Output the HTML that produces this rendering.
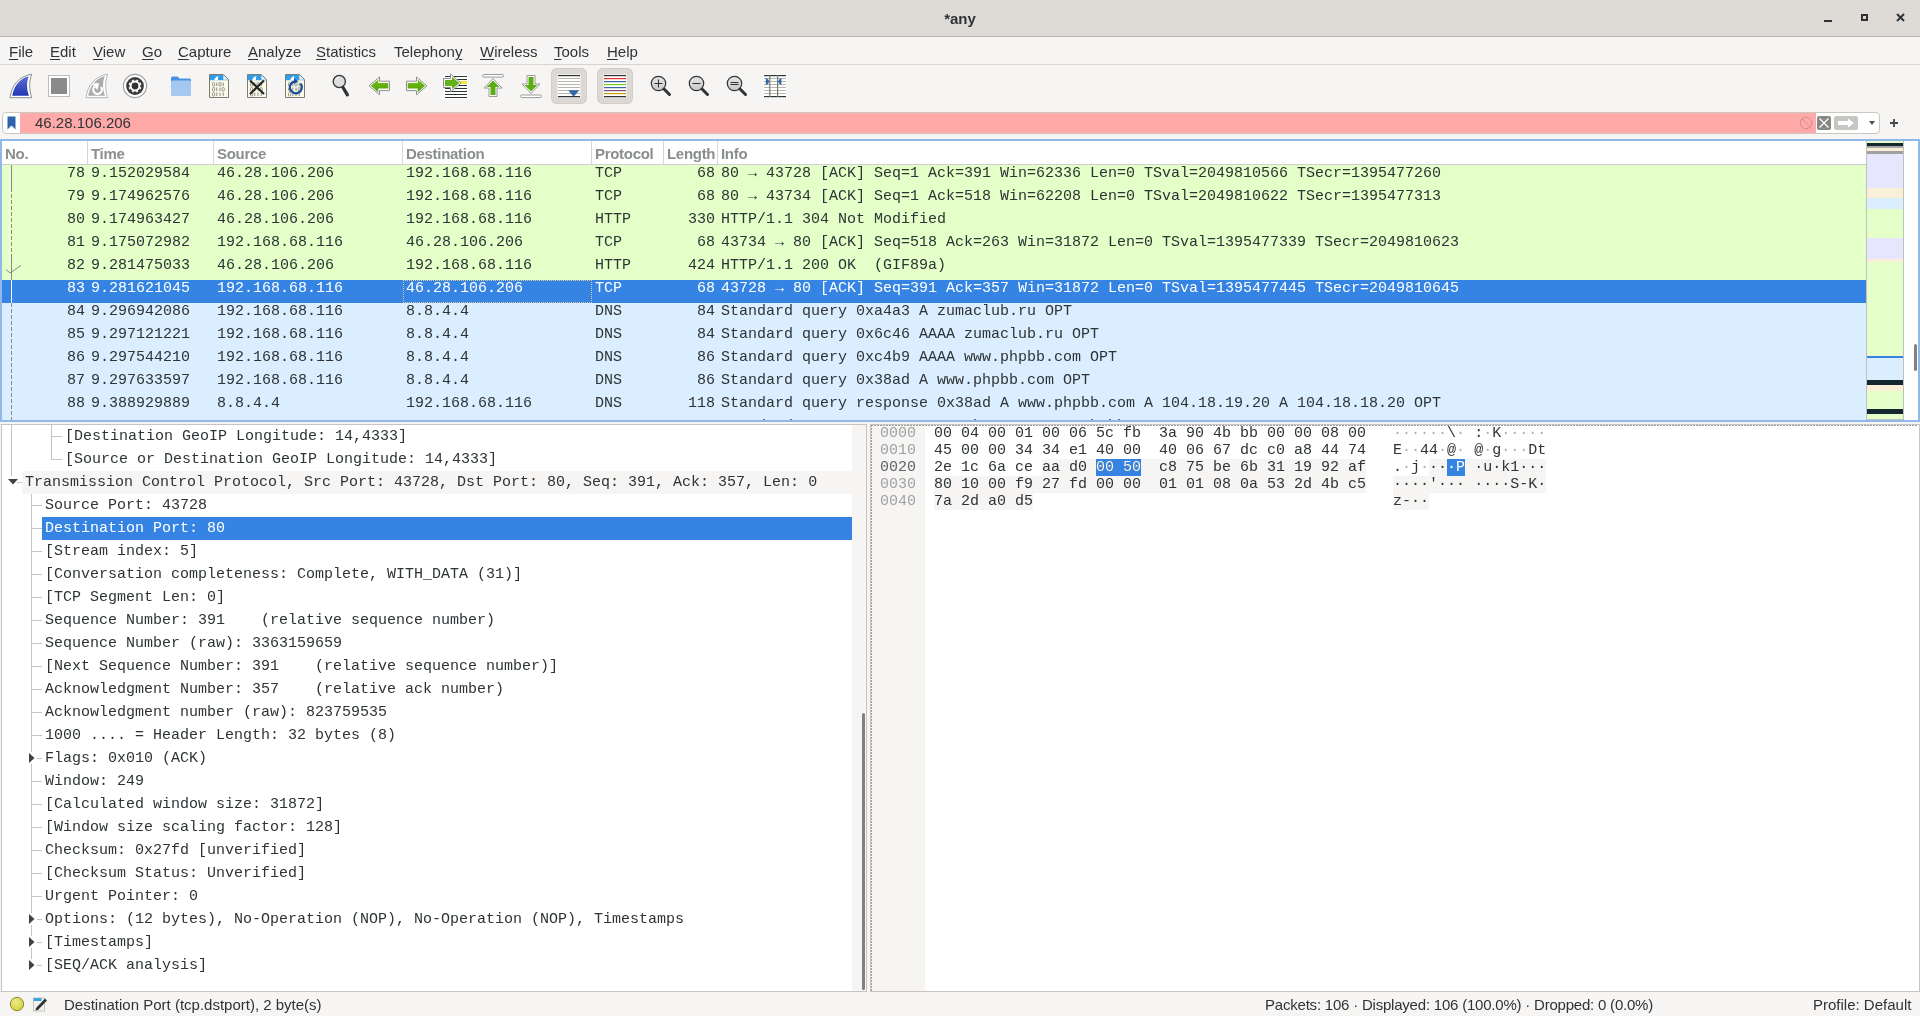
<!DOCTYPE html><html><head><meta charset="utf-8"><style>
*{box-sizing:border-box}
body{margin:0;width:1920px;height:1016px;overflow:hidden;-webkit-font-smoothing:antialiased;background:#f6f5f4;position:relative;font-family:"Liberation Sans",sans-serif;color:#2e3436}
.abs{position:absolute}
#det,#bytes,#plist,#status,.menu span,#title .t,.abs{will-change:transform}
#title{left:0;top:0;width:1920px;height:37px;background:#dedbd7;border-bottom:1px solid #bcb6b0}
#title .t{position:absolute;left:0;width:1920px;top:10px;text-align:center;font-weight:bold;font-size:15px;line-height:18px;color:#2e3436}
.menu span{position:absolute;top:43px;font-size:15px;line-height:18px;color:#2e3436}
.menu u{text-decoration:underline;text-decoration-thickness:1px;text-underline-offset:2px}
#msep{left:0;top:64px;width:1920px;height:1px;background:#d8d4d0}
.mono{font-family:"Liberation Mono",monospace;font-size:15px}
#plist{left:0;top:139px;width:1920px;height:283px;border:2px solid #90b8ea;background:#fff;overflow:hidden}
.hdr{position:absolute;top:0;height:24px;border-bottom:1px solid #cfcfcf;background:#fff;width:1864px;left:0}
.hdr span{position:absolute;top:4px;font-size:15px;line-height:18px;color:#8b8e8f;font-weight:bold;letter-spacing:-0.3px}
.hdr i{position:absolute;top:0;width:1px;height:23px;background:#d6d6d6}
.row{position:absolute;left:0;width:1864px;height:23px;line-height:17px;white-space:pre}
.row span{position:absolute;top:0}
.g{background:#e4ffc7}.b{background:#daeeff}.sel{background:#3584e4;color:#fff}
#det{left:0;top:424px;width:867px;height:568px;border:1px solid #c9c4bf;border-left-color:#f6f5f4;background:#fff;overflow:hidden}
.drow{position:absolute;height:23px;line-height:17px;padding-top:3px;white-space:pre}
#bytes{left:870px;top:424px;width:1050px;height:568px;border:1px solid #c9c4bf;background:#fff;overflow:hidden}
.hx{position:absolute;white-space:pre;line-height:17px}
#status{left:0;top:992px;width:1920px;height:24px;background:#f6f5f4}
</style></head><body>
<div id="title" class="abs"><div class="t">*any</div></div>
<div class="menu">
<span style="left:9px"><u>F</u>ile</span>
<span style="left:50px"><u>E</u>dit</span>
<span style="left:93px"><u>V</u>iew</span>
<span style="left:142px"><u>G</u>o</span>
<span style="left:178px"><u>C</u>apture</span>
<span style="left:248px"><u>A</u>nalyze</span>
<span style="left:316px"><u>S</u>tatistics</span>
<span style="left:394px">Telephon<u>y</u></span>
<span style="left:480px"><u>W</u>ireless</span>
<span style="left:554px"><u>T</u>ools</span>
<span style="left:607px"><u>H</u>elp</span>
</div><div id="msep" class="abs"></div>
<div class="abs" style="left:551px;top:68px;width:36px;height:36px;border-radius:6px;background:#dcd8d4;box-shadow:inset 0 0 0 1px #d2cdc8"></div>
<div class="abs" style="left:597px;top:68px;width:36px;height:36px;border-radius:6px;background:#dcd8d4;box-shadow:inset 0 0 0 1px #d2cdc8"></div>
<svg class="abs" style="left:9px;top:73px" width="26" height="26" viewBox="0 0 26 26"><defs><linearGradient id="fb" x1="0" y1="0" x2="0" y2="1"><stop offset="0" stop-color="#5b6fd4"/><stop offset="1" stop-color="#2236b4"/></linearGradient></defs><path d="M1 24.7 C2.5 12 10.5 3 22.7 1.2 C20 8 20 16 22.7 24.7 Z" fill="#fff" stroke="#8c8c8c" stroke-width="1"/><path d="M3.2 22.7 C5 13 11 5 19.7 3.2 C17.5 9 17.5 16 20 22.7 Z" fill="url(#fb)"/></svg>
<svg class="abs" style="left:47px;top:74px" width="24" height="24" viewBox="0 0 24 24"><rect x="1.5" y="1.5" width="21" height="21" fill="#fff" stroke="#bdbdbd"/><rect x="4" y="4" width="16" height="16" fill="#8a8a8a"/></svg>
<svg class="abs" style="left:85px;top:73px" width="26" height="26" viewBox="0 0 26 26"><path d="M1 24.7 C2.5 12 10.5 3 22.7 1.2 C20 8 20 16 22.7 24.7 Z" fill="#fff" stroke="#b4b4b4" stroke-width="1"/><path d="M3.2 22.7 C5 13 11 5 19.7 3.2 C17.5 9 17.5 16 20 22.7 Z" fill="#ababab"/><path d="M9.6 13.5 A4.3 4.3 0 1 0 16 14" fill="none" stroke="#fff" stroke-width="2.2"/><path d="M7 10.5 L14 10 L12.5 17 Z" fill="#fff"/></svg>
<svg class="abs" style="left:122px;top:73px" width="26" height="26" viewBox="0 0 26 26"><circle cx="13" cy="13" r="11.6" fill="#fff" stroke="#9c9c9c" stroke-width="1.1"/><circle cx="13" cy="13" r="8.9" fill="#3c3c3c"/><g fill="#fff"><circle cx="13" cy="13" r="5.4"/><rect x="12" y="6.5" width="2" height="1.5" transform="rotate(22.5 13 13)"/><rect x="12" y="6.5" width="2" height="1.5" transform="rotate(67.5 13 13)"/><rect x="12" y="6.5" width="2" height="1.5" transform="rotate(112.5 13 13)"/><rect x="12" y="6.5" width="2" height="1.5" transform="rotate(157.5 13 13)"/><rect x="12" y="6.5" width="2" height="1.5" transform="rotate(202.5 13 13)"/><rect x="12" y="6.5" width="2" height="1.5" transform="rotate(247.5 13 13)"/><rect x="12" y="6.5" width="2" height="1.5" transform="rotate(292.5 13 13)"/><rect x="12" y="6.5" width="2" height="1.5" transform="rotate(337.5 13 13)"/></g><circle cx="13" cy="13" r="3.4" fill="#333"/></svg>
<svg class="abs" style="left:170px;top:75px" width="22" height="22" viewBox="0 0 22 22"><path d="M1 3 Q1 1.5 2.5 1.5 L7.5 1.5 L9.5 3.5 L19.5 3.5 Q21 3.5 21 5 L21 8 L1 8 Z" fill="#4a90e2"/><rect x="1" y="5.5" width="20" height="15.5" rx="1.5" fill="#a4c8ef"/></svg>
<svg class="abs" style="left:208px;top:73px" width="22" height="26" viewBox="0 0 22 26"><path d="M1.5 1.5 L15.5 1.5 L20.5 6.5 L20.5 24.5 L1.5 24.5 Z" fill="#fbfbea" stroke="#7a7a76"/><path d="M2 2 L15.3 2 L20 6.7 L20 7.3 L2 7.3 Z" fill="#2f9ee6"/><path d="M15.3 2 L15.3 6.7 L20 6.7 Z" fill="#f2f2f2"/><path d="M6 7.3 Q7.5 3.5 10.5 3 Q9.5 5 10 7.3 Z" fill="#fff"/><rect x="4.5" y="9.5" width="2.2" height="3.6" rx="1" fill="none" stroke="#8a8a82" stroke-width="0.9"/><path d="M8.8 9.5 V13.1" stroke="#8a8a82" stroke-width="1"/><rect x="10.9" y="9.5" width="2.2" height="3.6" rx="1" fill="none" stroke="#8a8a82" stroke-width="0.9"/><path d="M15.2 9.5 V13.1" stroke="#8a8a82" stroke-width="1"/><rect x="4.5" y="14.5" width="2.2" height="3.6" rx="1" fill="none" stroke="#8a8a82" stroke-width="0.9"/><path d="M8.8 14.5 V18.1" stroke="#8a8a82" stroke-width="1"/><path d="M12.0 14.5 V18.1" stroke="#8a8a82" stroke-width="1"/><rect x="14.1" y="14.5" width="2.2" height="3.6" rx="1" fill="none" stroke="#8a8a82" stroke-width="0.9"/><rect x="4.5" y="19.5" width="2.2" height="3.6" rx="1" fill="none" stroke="#8a8a82" stroke-width="0.9"/><path d="M8.8 19.5 V23.1" stroke="#8a8a82" stroke-width="1"/><path d="M12.0 19.5 V23.1" stroke="#8a8a82" stroke-width="1"/><path d="M15.2 19.5 V23.1" stroke="#8a8a82" stroke-width="1"/></svg>
<svg class="abs" style="left:246px;top:73px" width="22" height="26" viewBox="0 0 22 26"><path d="M1.5 1.5 L15.5 1.5 L20.5 6.5 L20.5 24.5 L1.5 24.5 Z" fill="#fbfbea" stroke="#7a7a76"/><path d="M2 2 L15.3 2 L20 6.7 L20 7.3 L2 7.3 Z" fill="#2f9ee6"/><path d="M15.3 2 L15.3 6.7 L20 6.7 Z" fill="#f2f2f2"/><path d="M6 7.3 Q7.5 3.5 10.5 3 Q9.5 5 10 7.3 Z" fill="#fff"/><rect x="4.5" y="9.5" width="2.2" height="3.6" rx="1" fill="none" stroke="#8a8a82" stroke-width="0.9"/><path d="M8.8 9.5 V13.1" stroke="#8a8a82" stroke-width="1"/><rect x="10.9" y="9.5" width="2.2" height="3.6" rx="1" fill="none" stroke="#8a8a82" stroke-width="0.9"/><path d="M15.2 9.5 V13.1" stroke="#8a8a82" stroke-width="1"/><rect x="4.5" y="14.5" width="2.2" height="3.6" rx="1" fill="none" stroke="#8a8a82" stroke-width="0.9"/><path d="M8.8 14.5 V18.1" stroke="#8a8a82" stroke-width="1"/><path d="M12.0 14.5 V18.1" stroke="#8a8a82" stroke-width="1"/><rect x="14.1" y="14.5" width="2.2" height="3.6" rx="1" fill="none" stroke="#8a8a82" stroke-width="0.9"/><rect x="4.5" y="19.5" width="2.2" height="3.6" rx="1" fill="none" stroke="#8a8a82" stroke-width="0.9"/><path d="M8.8 19.5 V23.1" stroke="#8a8a82" stroke-width="1"/><path d="M12.0 19.5 V23.1" stroke="#8a8a82" stroke-width="1"/><path d="M15.2 19.5 V23.1" stroke="#8a8a82" stroke-width="1"/><path d="M4 7.5 L18 21 M18 7.5 L4 21" stroke="#232323" stroke-width="2.2"/></svg>
<svg class="abs" style="left:284px;top:73px" width="22" height="26" viewBox="0 0 22 26"><path d="M1.5 1.5 L15.5 1.5 L20.5 6.5 L20.5 24.5 L1.5 24.5 Z" fill="#fbfbea" stroke="#7a7a76"/><path d="M2 2 L15.3 2 L20 6.7 L20 7.3 L2 7.3 Z" fill="#2f9ee6"/><path d="M15.3 2 L15.3 6.7 L20 6.7 Z" fill="#f2f2f2"/><path d="M6 7.3 Q7.5 3.5 10.5 3 Q9.5 5 10 7.3 Z" fill="#fff"/><rect x="4.5" y="9.5" width="2.2" height="3.6" rx="1" fill="none" stroke="#8a8a82" stroke-width="0.9"/><path d="M8.8 9.5 V13.1" stroke="#8a8a82" stroke-width="1"/><rect x="10.9" y="9.5" width="2.2" height="3.6" rx="1" fill="none" stroke="#8a8a82" stroke-width="0.9"/><path d="M15.2 9.5 V13.1" stroke="#8a8a82" stroke-width="1"/><rect x="4.5" y="14.5" width="2.2" height="3.6" rx="1" fill="none" stroke="#8a8a82" stroke-width="0.9"/><path d="M8.8 14.5 V18.1" stroke="#8a8a82" stroke-width="1"/><path d="M12.0 14.5 V18.1" stroke="#8a8a82" stroke-width="1"/><rect x="14.1" y="14.5" width="2.2" height="3.6" rx="1" fill="none" stroke="#8a8a82" stroke-width="0.9"/><rect x="4.5" y="19.5" width="2.2" height="3.6" rx="1" fill="none" stroke="#8a8a82" stroke-width="0.9"/><path d="M8.8 19.5 V23.1" stroke="#8a8a82" stroke-width="1"/><path d="M12.0 19.5 V23.1" stroke="#8a8a82" stroke-width="1"/><path d="M15.2 19.5 V23.1" stroke="#8a8a82" stroke-width="1"/><path d="M16.5 10.5 A6 6 0 1 1 11 8.3" fill="none" stroke="#1d4a9a" stroke-width="2.2"/><path d="M10 5.5 L14.5 8.3 L10 11 Z" fill="#1d4a9a"/></svg>
<svg class="abs" style="left:331px;top:74px" width="20" height="24" viewBox="0 0 20 24"><circle cx="8.3" cy="7.5" r="6.1" fill="#dedede" stroke="#333" stroke-width="1.3"/><path d="M12 13.5 L16.4 20.8" stroke="#2e3436" stroke-width="3.3" stroke-linecap="round"/><path d="M4.6 5.6 Q5.8 3.6 8 3.4" stroke="#fff" stroke-width="1" fill="none"/></svg>
<svg class="abs" style="left:368px;top:76px" width="23" height="20" viewBox="0 0 23 20"><defs><linearGradient id="ga" x1="0" y1="0" x2="0" y2="1"><stop offset="0" stop-color="#76c11f"/><stop offset="1" stop-color="#4e9f00"/></linearGradient></defs><path d="M1 9.85 L11.5 1 L11.5 5.2 L21.5 5.2 L21.5 14.6 L11.5 14.6 L11.5 18.7 Z" fill="#fff" stroke="#8f8f8f" stroke-width="1" stroke-linejoin="round"/><path d="M2.8 9.85 L10.3 3.5 L10.3 7 L20.3 7 L20.3 12.6 L10.3 12.6 L10.3 16.2 Z" fill="url(#ga)"/></svg>
<svg class="abs" style="left:405px;top:76px" width="23" height="20" viewBox="0 0 23 20"><g transform="translate(23,0) scale(-1,1)"><defs><linearGradient id="gb" x1="0" y1="0" x2="0" y2="1"><stop offset="0" stop-color="#76c11f"/><stop offset="1" stop-color="#4e9f00"/></linearGradient></defs><path d="M1 9.85 L11.5 1 L11.5 5.2 L21.5 5.2 L21.5 14.6 L11.5 14.6 L11.5 18.7 Z" fill="#fff" stroke="#8f8f8f" stroke-width="1" stroke-linejoin="round"/><path d="M2.8 9.85 L10.3 3.5 L10.3 7 L20.3 7 L20.3 12.6 L10.3 12.6 L10.3 16.2 Z" fill="url(#gb)"/></g></svg>
<svg class="abs" style="left:442px;top:73px" width="26" height="26" viewBox="0 0 26 26"><g fill="#fff"><rect x="2" y="2" width="24" height="3"/><rect x="2" y="5" width="24" height="3"/><rect x="2" y="11" width="24" height="15"/></g><g fill="#2e3436"><rect x="3" y="3" width="22" height="1"/><rect x="3" y="6" width="22" height="1"/><rect x="3" y="12" width="22" height="1"/><rect x="3" y="15" width="22" height="1"/><rect x="3" y="18" width="22" height="1"/><rect x="3" y="21" width="22" height="1"/><rect x="3" y="24" width="22" height="1"/></g><rect x="17" y="8" width="8" height="3" fill="#fbe43a"/><path d="M1.5 5.5 L8.5 5.5 L8.5 1 L19 10 L8.5 19 L8.5 14.5 L1.5 14.5 Z" fill="#fff" stroke="#8f8f8f" stroke-width="1" stroke-linejoin="round"/><path d="M3 7 L10 7 L10 3.8 L17.3 10 L10 16.2 L10 13 L3 13 Z" fill="#62b21a"/></svg>
<svg class="abs" style="left:481px;top:73px" width="24" height="26" viewBox="0 0 24 26"><rect x="1.5" y="1.5" width="21" height="2.6" rx="1.3" fill="#fff" stroke="#9a9a9a"/><path d="M12 5.5 L21 15 L16 15 L16 23.5 L8 23.5 L8 15 L3 15 Z" fill="#fff" stroke="#9a9a9a" stroke-linejoin="round"/><path d="M12 7.5 L18.5 14 L14.5 14 L14.5 22 L9.5 22 L9.5 14 L5.5 14 Z" fill="#5aae14"/></svg>
<svg class="abs" style="left:519px;top:73px" width="24" height="26" viewBox="0 0 24 26"><rect x="1.5" y="22" width="21" height="2.6" rx="1.3" fill="#fff" stroke="#9a9a9a"/><path d="M12 20.5 L21 11 L16 11 L16 2.5 L8 2.5 L8 11 L3 11 Z" fill="#fff" stroke="#9a9a9a" stroke-linejoin="round"/><path d="M12 18.5 L18.5 12 L14.5 12 L14.5 4 L9.5 4 L9.5 12 L5.5 12 Z" fill="#5aae14"/></svg>
<svg class="abs" style="left:557px;top:74px" width="24" height="24" viewBox="0 0 24 24"><rect x="0.5" y="0.5" width="23" height="23" fill="#fff"/><rect x="1" y="1" width="22" height="1.2" fill="#2e3436"/><g fill="#b4b8b0"><rect x="1" y="4" width="22" height="1"/><rect x="1" y="7" width="22" height="1"/><rect x="1" y="10" width="22" height="1"/><rect x="1" y="13" width="22" height="1"/><rect x="1" y="16" width="22" height="1"/><rect x="1" y="19" width="22" height="1"/></g><rect x="1" y="22" width="22" height="1.2" fill="#2e3436"/><path d="M11.5 16.8 Q11.5 16.2 12.8 16.2 L20.7 16.2 Q22 16.2 21.6 17 L16.6 22.8 Z" fill="#3465a4"/></svg>
<svg class="abs" style="left:603px;top:74px" width="24" height="24" viewBox="0 0 24 24"><rect x="0.5" y="0.5" width="23" height="23" fill="#fff"/><rect x="1" y="1" width="22" height="1.2" fill="#2e3436"/><rect x="1" y="4" width="22" height="1.2" fill="#ef2929"/><rect x="1" y="7" width="22" height="1.2" fill="#3465a4"/><rect x="1" y="10" width="22" height="1.2" fill="#73d216"/><rect x="1" y="13" width="22" height="1.2" fill="#3465a4"/><rect x="1" y="16" width="22" height="1.2" fill="#75507b"/><rect x="1" y="19" width="22" height="1.2" fill="#c4a000"/><rect x="1" y="22" width="22" height="1.2" fill="#2e3436"/></svg>
<svg class="abs" style="left:649px;top:74px" width="24" height="24" viewBox="0 0 24 24"><defs><linearGradient id="gz" x1="0" y1="0" x2="0" y2="1"><stop offset="0" stop-color="#e6e6e6"/><stop offset="1" stop-color="#c8c8c8"/></linearGradient></defs><circle cx="9.5" cy="9.5" r="7.2" fill="url(#gz)" stroke="#333" stroke-width="1.2"/><path d="M15 15 L20.5 20.5" stroke="#2e3436" stroke-width="3" stroke-linecap="round"/><path d="M5.5 9.5 H13.5 M9.5 5.5 V13.5" stroke="#2e3436" stroke-width="1"/></svg>
<svg class="abs" style="left:687px;top:74px" width="24" height="24" viewBox="0 0 24 24"><defs><linearGradient id="gz" x1="0" y1="0" x2="0" y2="1"><stop offset="0" stop-color="#e6e6e6"/><stop offset="1" stop-color="#c8c8c8"/></linearGradient></defs><circle cx="9.5" cy="9.5" r="7.2" fill="url(#gz)" stroke="#333" stroke-width="1.2"/><path d="M15 15 L20.5 20.5" stroke="#2e3436" stroke-width="3" stroke-linecap="round"/><path d="M5.5 9.5 H13.5" stroke="#2e3436" stroke-width="1"/></svg>
<svg class="abs" style="left:725px;top:74px" width="24" height="24" viewBox="0 0 24 24"><defs><linearGradient id="gz" x1="0" y1="0" x2="0" y2="1"><stop offset="0" stop-color="#e6e6e6"/><stop offset="1" stop-color="#c8c8c8"/></linearGradient></defs><circle cx="9.5" cy="9.5" r="7.2" fill="url(#gz)" stroke="#333" stroke-width="1.2"/><path d="M15 15 L20.5 20.5" stroke="#2e3436" stroke-width="3" stroke-linecap="round"/><path d="M5.5 8.5 H13.5 M5.5 10.5 H13.5" stroke="#2e3436" stroke-width="1"/></svg>
<svg class="abs" style="left:763px;top:74px" width="24" height="24" viewBox="0 0 24 24"><rect x="0.5" y="0.5" width="23" height="23" fill="#fff"/><rect x="1" y="1" width="22" height="1.2" fill="#2e3436"/><g fill="#b4b8b0"><rect x="1" y="4" width="22" height="1"/><rect x="1" y="7" width="22" height="1"/><rect x="1" y="10" width="22" height="1"/><rect x="1" y="13" width="22" height="1"/><rect x="1" y="16" width="22" height="1"/><rect x="1" y="19" width="22" height="1"/></g><rect x="1" y="22" width="22" height="1.2" fill="#2e3436"/><rect x="6.2" y="1" width="1.2" height="22" fill="#777a76"/><rect x="14" y="1" width="1.2" height="22" fill="#777a76"/><path d="M2.8 4 C5 5 6.2 6.5 6.2 7.5 C6.2 8.5 5 10 2.8 11 Z" fill="#3465a4"/><path d="M18.4 4 C16.2 5 15.2 6.5 15.2 7.5 C15.2 8.5 16.2 10 18.4 11 Z" fill="#3465a4"/></svg>
<div class="abs" style="left:2px;top:112px;width:1878px;height:22px;border:1px solid #cdc7c2;border-radius:4px;background:#fff"></div>
<div class="abs" style="left:20px;top:113px;width:1796px;height:20px;background:#ffa9a9"></div>
<svg class="abs" style="left:6px;top:115px" width="12" height="16" viewBox="0 0 12 16"><path d="M1.5 1.5 H9.5 V14.5 L5.5 10.5 L1.5 14.5 Z" fill="#2f62ad"/></svg>
<div class="abs" style="left:35px;top:114px;font-size:15px;line-height:18px;color:#2e3436">46.28.106.206</div>
<svg class="abs" style="left:1799px;top:116px" width="14" height="14" viewBox="0 0 14 14"><circle cx="7" cy="7" r="5.8" fill="none" stroke="#d48d8d" stroke-width="1"/><path d="M3 3 L11 11" stroke="#d48d8d"/></svg>
<svg class="abs" style="left:1817px;top:116px" width="14" height="14" viewBox="0 0 14 14"><rect x="0" y="0" width="14" height="14" rx="2" fill="#868884"/><path d="M2.5 2.5 L11.5 11.5 M11.5 2.5 L2.5 11.5" stroke="#fff" stroke-width="1.3"/></svg>
<svg class="abs" style="left:1834px;top:116px" width="24" height="14" viewBox="0 0 24 14"><rect x="0" y="0" width="24" height="14" rx="2" fill="#c6c6c4"/><path d="M4 5 H14 V2.5 L20 7 L14 11.5 V9 H4 Z" fill="#fff"/></svg>
<svg class="abs" style="left:1868px;top:120px" width="8" height="6" viewBox="0 0 8 6"><path d="M1 1 L7 1 L4 5 Z" fill="#4a4f52"/></svg>
<svg class="abs" style="left:1889px;top:118px" width="10" height="10" viewBox="0 0 10 10"><path d="M5 1 V9 M1 5 H9" stroke="#454a4d" stroke-width="1.8"/></svg>
<div id="plist" class="abs">
<div class="hdr">
<span style="left:3px">No.</span>
<i style="left:85px"></i>
<span style="left:89px">Time</span>
<i style="left:211px"></i>
<span style="left:215px">Source</span>
<i style="left:400px"></i>
<span style="left:404px">Destination</span>
<i style="left:589px"></i>
<span style="left:593px">Protocol</span>
<i style="left:661px"></i>
<span style="left:665px">Length</span>
<i style="left:715px"></i>
<span style="left:719px">Info</span>
</div>
<div class="row mono g" style="top:24px">
<span style="left:65px">78</span>
<span style="left:89px">9.152029584</span>
<span style="left:215px">46.28.106.206</span>
<span style="left:404px">192.168.68.116</span>
<span style="left:593px">TCP</span>
<span style="left:695px">68</span>
<span style="left:719px">80 → 43728 [ACK] Seq=1 Ack=391 Win=62336 Len=0 TSval=2049810566 TSecr=1395477260</span>
</div>
<div class="row mono g" style="top:47px">
<span style="left:65px">79</span>
<span style="left:89px">9.174962576</span>
<span style="left:215px">46.28.106.206</span>
<span style="left:404px">192.168.68.116</span>
<span style="left:593px">TCP</span>
<span style="left:695px">68</span>
<span style="left:719px">80 → 43734 [ACK] Seq=1 Ack=518 Win=62208 Len=0 TSval=2049810622 TSecr=1395477313</span>
</div>
<div class="row mono g" style="top:70px">
<span style="left:65px">80</span>
<span style="left:89px">9.174963427</span>
<span style="left:215px">46.28.106.206</span>
<span style="left:404px">192.168.68.116</span>
<span style="left:593px">HTTP</span>
<span style="left:686px">330</span>
<span style="left:719px">HTTP/1.1 304 Not Modified </span>
</div>
<div class="row mono g" style="top:93px">
<span style="left:65px">81</span>
<span style="left:89px">9.175072982</span>
<span style="left:215px">192.168.68.116</span>
<span style="left:404px">46.28.106.206</span>
<span style="left:593px">TCP</span>
<span style="left:695px">68</span>
<span style="left:719px">43734 → 80 [ACK] Seq=518 Ack=263 Win=31872 Len=0 TSval=1395477339 TSecr=2049810623</span>
</div>
<div class="row mono g" style="top:116px">
<span style="left:65px">82</span>
<span style="left:89px">9.281475033</span>
<span style="left:215px">46.28.106.206</span>
<span style="left:404px">192.168.68.116</span>
<span style="left:593px">HTTP</span>
<span style="left:686px">424</span>
<span style="left:719px">HTTP/1.1 200 OK  (GIF89a)</span>
</div>
<div class="row mono sel" style="top:139px">
<span style="left:65px">83</span>
<span style="left:89px">9.281621045</span>
<span style="left:215px">192.168.68.116</span>
<span style="left:404px">46.28.106.206</span>
<span style="left:593px">TCP</span>
<span style="left:695px">68</span>
<span style="left:719px">43728 → 80 [ACK] Seq=391 Ack=357 Win=31872 Len=0 TSval=1395477445 TSecr=2049810645</span>
</div>
<div class="row mono b" style="top:162px">
<span style="left:65px">84</span>
<span style="left:89px">9.296942086</span>
<span style="left:215px">192.168.68.116</span>
<span style="left:404px">8.8.4.4</span>
<span style="left:593px">DNS</span>
<span style="left:695px">84</span>
<span style="left:719px">Standard query 0xa4a3 A zumaclub.ru OPT</span>
</div>
<div class="row mono b" style="top:185px">
<span style="left:65px">85</span>
<span style="left:89px">9.297121221</span>
<span style="left:215px">192.168.68.116</span>
<span style="left:404px">8.8.4.4</span>
<span style="left:593px">DNS</span>
<span style="left:695px">84</span>
<span style="left:719px">Standard query 0x6c46 AAAA zumaclub.ru OPT</span>
</div>
<div class="row mono b" style="top:208px">
<span style="left:65px">86</span>
<span style="left:89px">9.297544210</span>
<span style="left:215px">192.168.68.116</span>
<span style="left:404px">8.8.4.4</span>
<span style="left:593px">DNS</span>
<span style="left:695px">86</span>
<span style="left:719px">Standard query 0xc4b9 AAAA www.phpbb.com OPT</span>
</div>
<div class="row mono b" style="top:231px">
<span style="left:65px">87</span>
<span style="left:89px">9.297633597</span>
<span style="left:215px">192.168.68.116</span>
<span style="left:404px">8.8.4.4</span>
<span style="left:593px">DNS</span>
<span style="left:695px">86</span>
<span style="left:719px">Standard query 0x38ad A www.phpbb.com OPT</span>
</div>
<div class="row mono b" style="top:254px">
<span style="left:65px">88</span>
<span style="left:89px">9.388929889</span>
<span style="left:215px">8.8.4.4</span>
<span style="left:404px">192.168.68.116</span>
<span style="left:593px">DNS</span>
<span style="left:686px">118</span>
<span style="left:719px">Standard query response 0x38ad A www.phpbb.com A 104.18.19.20 A 104.18.18.20 OPT</span>
</div>
<div class="row mono b" style="top:277px">
<span style="left:65px">89</span>
<span style="left:89px">9.389000000</span>
<span style="left:215px">8.8.4.4</span>
<span style="left:404px">192.168.68.116</span>
<span style="left:593px">DNS</span>
<span style="left:686px">134</span>
<span style="left:719px">Standard query response 0xc4b9 AAAA www.phpbb.com AAAA 2606:4700::6812:1214 OPT</span>
</div>
<div class="abs" style="left:9px;top:24px;width:1px;height:23px;background:#8a8a8a"></div>
<div class="abs" style="left:9px;top:47px;width:1px;height:70px;background:repeating-linear-gradient(#8a8a8a 0 4px,transparent 4px 6px)"></div>
<div class="abs" style="left:9px;top:117px;width:1px;height:22px;background:#8a8a8a"></div>
<svg class="abs" style="left:1px;top:124px" width="20" height="10"><path d="M3 4.5 L7 8 L18 0.5" fill="none" stroke="#8a8a8a" stroke-width="1"/></svg>
<div class="abs" style="left:9px;top:139px;width:1px;height:23px;background:#ffffff"></div>
<div class="abs" style="left:9px;top:162px;width:1px;height:120px;background:repeating-linear-gradient(#8a8a8a 0 4px,transparent 4px 6px)"></div>
<div class="abs" style="left:401px;top:139px;width:189px;height:23px;border:1px dotted #dccba6"></div>
<div class="abs" style="left:1864px;top:0px;width:38px;height:279px;border:1px solid #c0c0c0;border-top:none;background:#e4ffc7"></div>
<div class="abs" style="left:1865px;top:0px;width:36px;height:2px;background:#e4ffc7"></div>
<div class="abs" style="left:1865px;top:2px;width:36px;height:3px;background:#12272e"></div>
<div class="abs" style="left:1865px;top:5px;width:36px;height:2px;background:#a8a8a8"></div>
<div class="abs" style="left:1865px;top:7px;width:36px;height:3px;background:#faf0d7"></div>
<div class="abs" style="left:1865px;top:10px;width:36px;height:3px;background:#a0a0a0"></div>
<div class="abs" style="left:1865px;top:13px;width:36px;height:34px;background:#e7e6ff"></div>
<div class="abs" style="left:1865px;top:47px;width:36px;height:10px;background:#faf0d7"></div>
<div class="abs" style="left:1865px;top:57px;width:36px;height:11px;background:#daeeff"></div>
<div class="abs" style="left:1865px;top:68px;width:36px;height:29px;background:#e4ffc7"></div>
<div class="abs" style="left:1865px;top:97px;width:36px;height:21px;background:#e7e6ff"></div>
<div class="abs" style="left:1865px;top:118px;width:36px;height:3px;background:#faf0d7"></div>
<div class="abs" style="left:1865px;top:121px;width:36px;height:94px;background:#e4ffc7"></div>
<div class="abs" style="left:1865px;top:215px;width:36px;height:2px;background:#3584e4"></div>
<div class="abs" style="left:1865px;top:217px;width:36px;height:22px;background:#daeeff"></div>
<div class="abs" style="left:1865px;top:239px;width:36px;height:5px;background:#12272e"></div>
<div class="abs" style="left:1865px;top:244px;width:36px;height:6px;background:#faf0d7"></div>
<div class="abs" style="left:1865px;top:250px;width:36px;height:18px;background:#e4ffc7"></div>
<div class="abs" style="left:1865px;top:268px;width:36px;height:5px;background:#12272e"></div>
<div class="abs" style="left:1865px;top:273px;width:36px;height:5px;background:#e4ffc7"></div>
<div class="abs" style="left:1912px;top:203px;width:3px;height:27px;border-radius:2px;background:#7e8284"></div>
</div>
<div id="det" class="abs mono">
<div class="abs" style="left:0px;top:0px;width:1px;height:566px;background:#c9c4bf"></div>
<div class="abs" style="left:10px;top:0px;width:1px;height:51px;background:#c4c4c4"></div>
<div class="abs" style="left:50px;top:0px;width:1px;height:35px;background:#c4c4c4"></div>
<div class="abs" style="left:50px;top:11px;width:11px;height:1px;background:#c4c4c4"></div>
<div class="abs" style="left:50px;top:34px;width:11px;height:1px;background:#c4c4c4"></div>
<svg class="abs" style="left:6px;top:54px" width="12" height="8"><path d="M1 0 L11 0 L6 5.5 Z" fill="#3d4245"/></svg>
<div class="abs" style="left:16px;top:57px;width:5px;height:1px;background:#c4c4c4"></div>
<div class="abs" style="left:30px;top:69px;width:1px;height:472px;background:#c4c4c4"></div>
<div class="abs" style="left:30px;top:80px;width:11px;height:1px;background:#c4c4c4"></div>
<div class="abs" style="left:30px;top:103px;width:11px;height:1px;background:#c4c4c4"></div>
<div class="abs" style="left:30px;top:126px;width:11px;height:1px;background:#c4c4c4"></div>
<div class="abs" style="left:30px;top:149px;width:11px;height:1px;background:#c4c4c4"></div>
<div class="abs" style="left:30px;top:172px;width:11px;height:1px;background:#c4c4c4"></div>
<div class="abs" style="left:30px;top:195px;width:11px;height:1px;background:#c4c4c4"></div>
<div class="abs" style="left:30px;top:218px;width:11px;height:1px;background:#c4c4c4"></div>
<div class="abs" style="left:30px;top:241px;width:11px;height:1px;background:#c4c4c4"></div>
<div class="abs" style="left:30px;top:264px;width:11px;height:1px;background:#c4c4c4"></div>
<div class="abs" style="left:30px;top:287px;width:11px;height:1px;background:#c4c4c4"></div>
<div class="abs" style="left:30px;top:310px;width:11px;height:1px;background:#c4c4c4"></div>
<div class="abs" style="left:30px;top:327px;width:1px;height:12px;background:#ffffff"></div>
<svg class="abs" style="left:27px;top:328px" width="8" height="12"><path d="M1 0 L6.5 5 L1 10 Z" fill="#3d4245"/></svg>
<div class="abs" style="left:36px;top:333px;width:5px;height:1px;background:#c4c4c4"></div>
<div class="abs" style="left:30px;top:356px;width:11px;height:1px;background:#c4c4c4"></div>
<div class="abs" style="left:30px;top:379px;width:11px;height:1px;background:#c4c4c4"></div>
<div class="abs" style="left:30px;top:402px;width:11px;height:1px;background:#c4c4c4"></div>
<div class="abs" style="left:30px;top:425px;width:11px;height:1px;background:#c4c4c4"></div>
<div class="abs" style="left:30px;top:448px;width:11px;height:1px;background:#c4c4c4"></div>
<div class="abs" style="left:30px;top:471px;width:11px;height:1px;background:#c4c4c4"></div>
<div class="abs" style="left:30px;top:488px;width:1px;height:12px;background:#ffffff"></div>
<svg class="abs" style="left:27px;top:489px" width="8" height="12"><path d="M1 0 L6.5 5 L1 10 Z" fill="#3d4245"/></svg>
<div class="abs" style="left:36px;top:494px;width:5px;height:1px;background:#c4c4c4"></div>
<div class="abs" style="left:30px;top:511px;width:1px;height:12px;background:#ffffff"></div>
<svg class="abs" style="left:27px;top:512px" width="8" height="12"><path d="M1 0 L6.5 5 L1 10 Z" fill="#3d4245"/></svg>
<div class="abs" style="left:36px;top:517px;width:5px;height:1px;background:#c4c4c4"></div>
<div class="abs" style="left:30px;top:534px;width:1px;height:12px;background:#ffffff"></div>
<svg class="abs" style="left:27px;top:535px" width="8" height="12"><path d="M1 0 L6.5 5 L1 10 Z" fill="#3d4245"/></svg>
<div class="abs" style="left:36px;top:540px;width:5px;height:1px;background:#c4c4c4"></div>
<div class="drow" style="top:0px;left:64px">[Destination GeoIP Longitude: 14,4333]</div>
<div class="drow" style="top:23px;left:64px">[Source or Destination GeoIP Longitude: 14,4333]</div>
<div class="drow" style="top:46px;left:21px;width:830px;padding-left:3px;background:#f6f5f4">Transmission Control Protocol, Src Port: 43728, Dst Port: 80, Seq: 391, Ack: 357, Len: 0</div>
<div class="drow" style="top:69px;left:44px">Source Port: 43728</div>
<div class="drow sel" style="top:92px;left:41px;width:810px;padding-left:3px">Destination Port: 80</div>
<div class="drow" style="top:115px;left:44px">[Stream index: 5]</div>
<div class="drow" style="top:138px;left:44px">[Conversation completeness: Complete, WITH_DATA (31)]</div>
<div class="drow" style="top:161px;left:44px">[TCP Segment Len: 0]</div>
<div class="drow" style="top:184px;left:44px">Sequence Number: 391    (relative sequence number)</div>
<div class="drow" style="top:207px;left:44px">Sequence Number (raw): 3363159659</div>
<div class="drow" style="top:230px;left:44px">[Next Sequence Number: 391    (relative sequence number)]</div>
<div class="drow" style="top:253px;left:44px">Acknowledgment Number: 357    (relative ack number)</div>
<div class="drow" style="top:276px;left:44px">Acknowledgment number (raw): 823759535</div>
<div class="drow" style="top:299px;left:44px">1000 .... = Header Length: 32 bytes (8)</div>
<div class="drow" style="top:322px;left:44px">Flags: 0x010 (ACK)</div>
<div class="drow" style="top:345px;left:44px">Window: 249</div>
<div class="drow" style="top:368px;left:44px">[Calculated window size: 31872]</div>
<div class="drow" style="top:391px;left:44px">[Window size scaling factor: 128]</div>
<div class="drow" style="top:414px;left:44px">Checksum: 0x27fd [unverified]</div>
<div class="drow" style="top:437px;left:44px">[Checksum Status: Unverified]</div>
<div class="drow" style="top:460px;left:44px">Urgent Pointer: 0</div>
<div class="drow" style="top:483px;left:44px">Options: (12 bytes), No-Operation (NOP), No-Operation (NOP), Timestamps</div>
<div class="drow" style="top:506px;left:44px">[Timestamps]</div>
<div class="drow" style="top:529px;left:44px">[SEQ/ACK analysis]</div>
<div class="abs" style="left:851px;top:0;width:14px;height:566px;background:#f6f5f4"></div>
<div class="abs" style="left:861px;top:288px;width:3px;height:277px;border-radius:2px;background:#7e8284"></div>
</div>
<div id="bytes" class="abs mono">
<div class="abs" style="left:0;top:0;width:1047px;height:1px;background:repeating-linear-gradient(90deg,#9d9d9d 0 2px,transparent 2px 3px)"></div>
<div class="abs" style="left:0;top:0;width:1px;height:566px;background:repeating-linear-gradient(#9d9d9d 0 2px,transparent 2px 3px)"></div>
<div class="abs" style="left:1px;top:1px;width:53px;height:565px;background:#f6f5f4"></div>
<div class="abs" style="left:171px;top:34px;width:324px;height:17px;background:#f6f5f4"></div>
<div class="abs" style="left:63px;top:51px;width:432px;height:17px;background:#f6f5f4"></div>
<div class="abs" style="left:63px;top:68px;width:99px;height:17px;background:#f6f5f4"></div>
<div class="abs" style="left:558px;top:34px;width:117px;height:17px;background:#f6f5f4"></div>
<div class="abs" style="left:522px;top:51px;width:153px;height:17px;background:#f6f5f4"></div>
<div class="abs" style="left:522px;top:68px;width:36px;height:17px;background:#f6f5f4"></div>
<div class="abs" style="left:225px;top:34px;width:45px;height:17px;background:#3584e4"></div>
<div class="abs" style="left:576px;top:34px;width:18px;height:17px;background:#3584e4"></div>
<div class="hx" style="left:9px;top:0px;color:#a2a2a2">0000</div>
<div class="hx" style="left:63px;top:0px">00 04 00 01 00 06 5c fb  3a 90 4b bb 00 00 08 00</div>
<div class="hx" style="left:9px;top:17px;color:#a2a2a2">0010</div>
<div class="hx" style="left:63px;top:17px">45 00 00 34 34 e1 40 00  40 06 67 dc c0 a8 44 74</div>
<div class="hx" style="left:9px;top:34px;color:#5e6366">0020</div>
<div class="hx" style="left:63px;top:34px">2e 1c 6a ce aa d0 00 50  c8 75 be 6b 31 19 92 af</div>
<div class="hx" style="left:9px;top:51px;color:#a2a2a2">0030</div>
<div class="hx" style="left:63px;top:51px">80 10 00 f9 27 fd 00 00  01 01 08 0a 53 2d 4b c5</div>
<div class="hx" style="left:9px;top:68px;color:#a2a2a2">0040</div>
<div class="hx" style="left:63px;top:68px">7a 2d a0 d5</div>
<div class="hx" style="left:225px;top:34px;color:#fff">00 50</div>
<div class="hx" style="left:522px;top:0px"><span style="color:#b0b0b0">·</span><span style="color:#b0b0b0">·</span><span style="color:#b0b0b0">·</span><span style="color:#b0b0b0">·</span><span style="color:#b0b0b0">·</span><span style="color:#b0b0b0">·</span><span style="color:#2e3436">\</span><span style="color:#b0b0b0">·</span><span style="color:#2e3436"> </span><span style="color:#2e3436">:</span><span style="color:#b0b0b0">·</span><span style="color:#2e3436">K</span><span style="color:#b0b0b0">·</span><span style="color:#b0b0b0">·</span><span style="color:#b0b0b0">·</span><span style="color:#b0b0b0">·</span><span style="color:#b0b0b0">·</span></div>
<div class="hx" style="left:522px;top:17px"><span style="color:#2e3436">E</span><span style="color:#b0b0b0">·</span><span style="color:#b0b0b0">·</span><span style="color:#2e3436">4</span><span style="color:#2e3436">4</span><span style="color:#b0b0b0">·</span><span style="color:#2e3436">@</span><span style="color:#b0b0b0">·</span><span style="color:#2e3436"> </span><span style="color:#2e3436">@</span><span style="color:#b0b0b0">·</span><span style="color:#2e3436">g</span><span style="color:#b0b0b0">·</span><span style="color:#b0b0b0">·</span><span style="color:#b0b0b0">·</span><span style="color:#2e3436">D</span><span style="color:#2e3436">t</span></div>
<div class="hx" style="left:522px;top:34px"><span style="color:#2e3436">.</span><span style="color:#b0b0b0">·</span><span style="color:#2e3436">j</span><span style="color:#b0b0b0">·</span><span style="color:#2e3436">·</span><span style="color:#2e3436">·</span><span style="color:#ffffff">·</span><span style="color:#ffffff">P</span><span style="color:#2e3436"> </span><span style="color:#2e3436">·</span><span style="color:#2e3436">u</span><span style="color:#2e3436">·</span><span style="color:#2e3436">k</span><span style="color:#2e3436">1</span><span style="color:#2e3436">·</span><span style="color:#2e3436">·</span><span style="color:#2e3436">·</span></div>
<div class="hx" style="left:522px;top:51px"><span style="color:#2e3436">·</span><span style="color:#2e3436">·</span><span style="color:#2e3436">·</span><span style="color:#2e3436">·</span><span style="color:#2e3436">&#x27;</span><span style="color:#2e3436">·</span><span style="color:#2e3436">·</span><span style="color:#2e3436">·</span><span style="color:#2e3436"> </span><span style="color:#2e3436">·</span><span style="color:#2e3436">·</span><span style="color:#2e3436">·</span><span style="color:#2e3436">·</span><span style="color:#2e3436">S</span><span style="color:#2e3436">-</span><span style="color:#2e3436">K</span><span style="color:#2e3436">·</span></div>
<div class="hx" style="left:522px;top:68px"><span style="color:#2e3436">z</span><span style="color:#2e3436">-</span><span style="color:#2e3436">·</span><span style="color:#2e3436">·</span></div>
</div>
<div id="status" class="abs">
<svg class="abs" style="left:9px;top:4px" width="16" height="16"><defs><radialGradient id="yb" cx="0.4" cy="0.35" r="0.7"><stop offset="0" stop-color="#ecea8a"/><stop offset="1" stop-color="#d3cf3c"/></radialGradient></defs><circle cx="8" cy="8" r="6.7" fill="url(#yb)" stroke="#8a8628" stroke-width="1"/></svg>
<svg class="abs" style="left:32px;top:4px" width="16" height="16"><rect x="1.5" y="2" width="11" height="13" fill="#f4f4ee" stroke="#c8c8c0"/><rect x="1.5" y="2" width="8" height="3" fill="#3aa3e3"/><path d="M4 12 L13 2.5 L15 4.5 L6 14 L3.5 14.5 Z" fill="#2e3436"/></svg>
<div class="abs" style="left:64px;top:4px;font-size:15px;line-height:18px">Destination Port (tcp.dstport), 2 byte(s)</div>
<div class="abs" style="left:1265px;top:4px;font-size:15px;line-height:18px;letter-spacing:-0.21px">Packets: 106 · Displayed: 106 (100.0%) · Dropped: 0 (0.0%)</div>
<div class="abs" style="left:1813px;top:4px;font-size:15px;line-height:18px">Profile: Default</div>
</div>
<svg class="abs" style="left:1818px;top:10px" width="96" height="16"><rect x="6" y="10" width="8" height="2" fill="#2e3436"/><rect x="44" y="5" width="5" height="5" fill="none" stroke="#2e3436" stroke-width="2"/><path d="M79 4 L86 11 M86 4 L79 11" stroke="#2e3436" stroke-width="2"/></svg>
</body></html>
